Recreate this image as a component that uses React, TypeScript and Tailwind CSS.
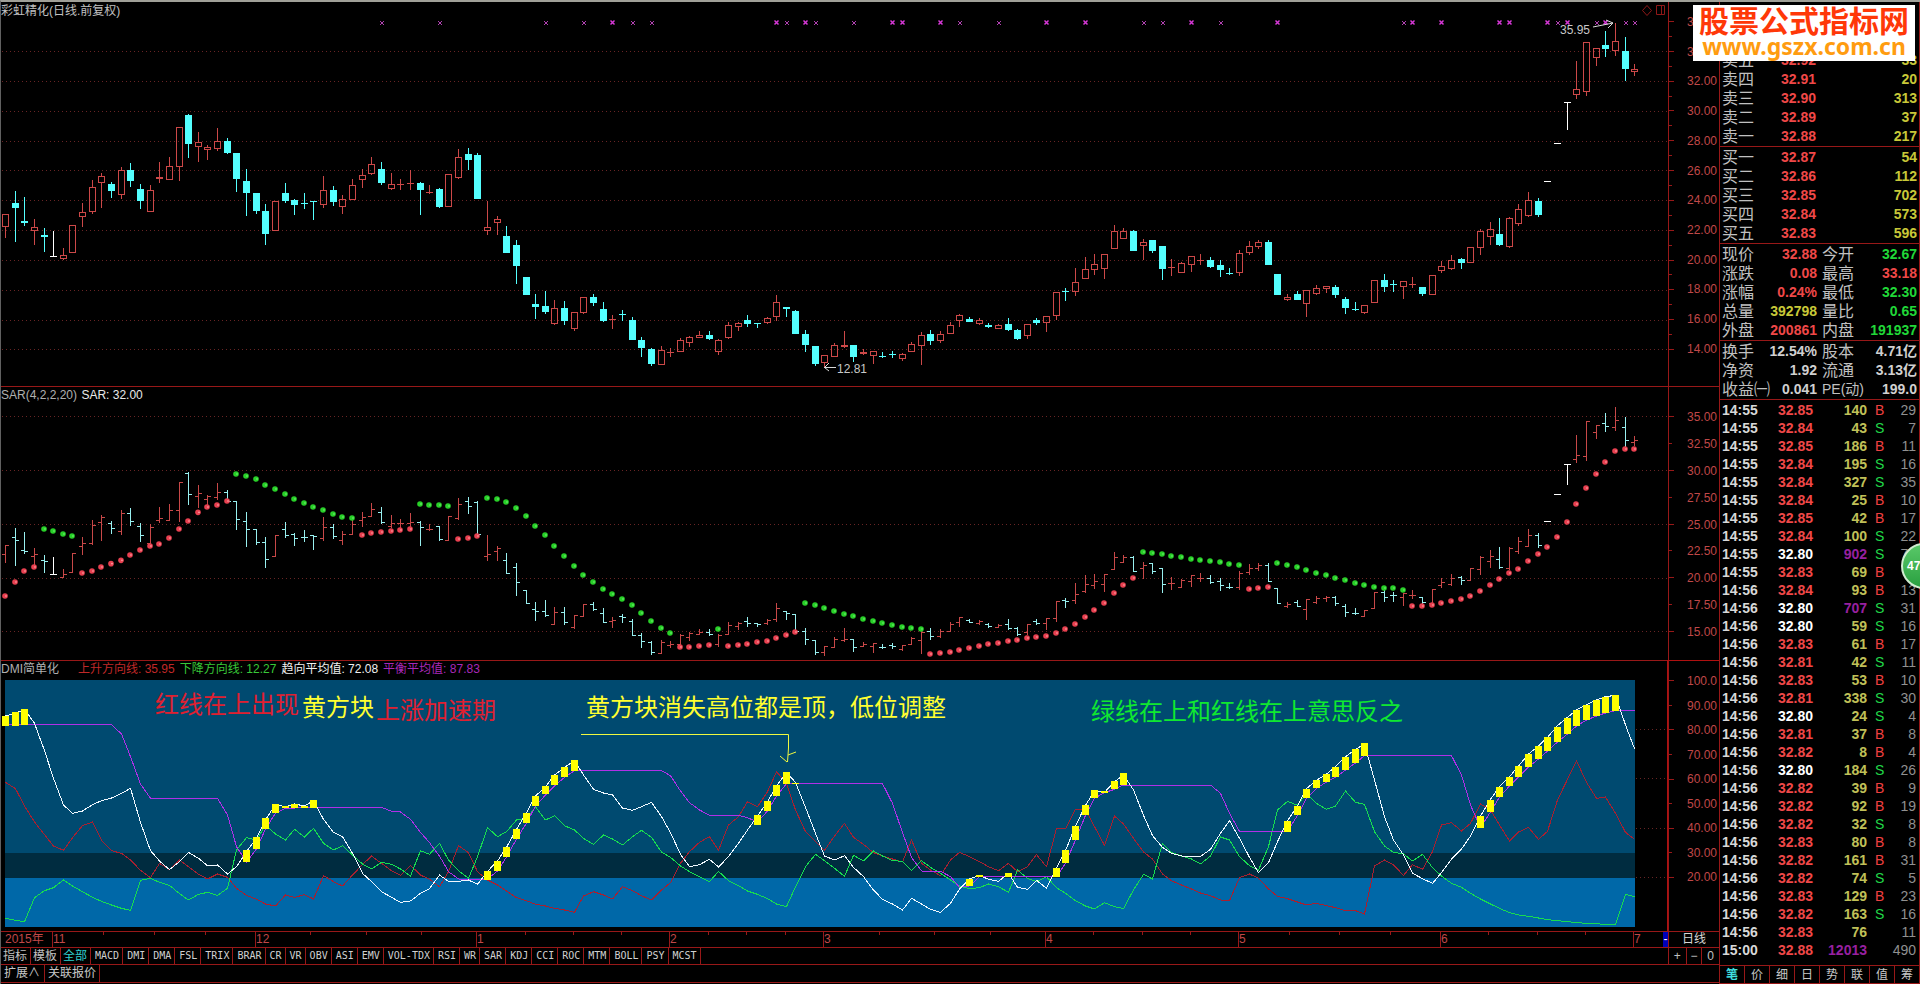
import clsx from 'clsx';

type Kind = 'u' | 'd' | 'w';
type Candle = [Kind, number, number, number, number];

// kind, high, body top, body bottom, low (three units per pixel)
const CANDLES: Candle[] = [
    ['u', 643, 643, 681, 714], ['d', 573, 609, 624, 726], ['d', 590, 664, 668, 678], ['u', 657, 681, 692, 735],
    ['d', 684, 706, 710, 756], ['w', 694, 767, 767, 767], ['u', 744, 766, 776, 779], ['u', 676, 676, 758, 758],
    ['u', 610, 637, 650, 681], ['u', 541, 562, 635, 641], ['u', 519, 529, 548, 624], ['d', 546, 552, 573, 594],
    ['u', 500, 511, 584, 597], ['d', 489, 510, 543, 560], ['d', 552, 567, 603, 627], ['u', 556, 571, 635, 637],
    ['u', 486, 532, 538, 549], ['u', 472, 499, 539, 539], ['u', 382, 382, 500, 543], ['d', 342, 345, 432, 474],
    ['u', 396, 427, 440, 486], ['u', 435, 442, 451, 480], ['u', 384, 423, 446, 452], ['d', 414, 423, 459, 461],
    ['d', 459, 459, 537, 576], ['d', 507, 543, 579, 648], ['d', 579, 579, 633, 641], ['d', 612, 633, 702, 735],
    ['u', 604, 604, 692, 692], ['d', 549, 579, 603, 609], ['d', 596, 599, 615, 644], ['d', 580, 609, 612, 627],
    ['d', 603, 603, 605, 660], ['u', 528, 571, 616, 623], ['d', 558, 570, 606, 617], ['u', 586, 598, 622, 641],
    ['u', 538, 556, 599, 600], ['u', 508, 526, 539, 564], ['u', 471, 493, 523, 524], ['d', 487, 507, 549, 554],
    ['u', 519, 553, 566, 571], ['u', 537, 552, 554, 570], ['u', 510, 550, 553, 569], ['d', 545, 549, 570, 644],
    ['u', 556, 576, 578, 582], ['d', 564, 567, 621, 624], ['u', 523, 523, 622, 622], ['u', 448, 472, 533, 537],
    ['d', 444, 462, 480, 510], ['d', 459, 465, 597, 597], ['u', 604, 682, 692, 705], ['u', 648, 658, 670, 705],
    ['d', 678, 708, 759, 759], ['d', 720, 735, 798, 852], ['d', 831, 831, 885, 885], ['d', 882, 912, 920, 957],
    ['d', 873, 918, 936, 941], ['u', 901, 925, 973, 975], ['d', 903, 924, 963, 975], ['u', 937, 937, 986, 992],
    ['u', 892, 892, 938, 941], ['d', 883, 891, 909, 917], ['d', 906, 927, 963, 965], ['u', 945, 956, 959, 987],
    ['d', 931, 942, 944, 963], ['d', 951, 960, 1020, 1020], ['d', 1011, 1020, 1044, 1071], ['d', 1045, 1047, 1092, 1098],
    ['u', 1038, 1050, 1094, 1094], ['u', 1044, 1056, 1060, 1071], ['u', 1014, 1021, 1055, 1055], ['u', 1008, 1012, 1028, 1040],
    ['u', 994, 1006, 1013, 1014], ['d', 993, 1005, 1017, 1020], ['u', 1017, 1021, 1055, 1064], ['u', 967, 976, 1013, 1017],
    ['u', 965, 969, 980, 993], ['d', 945, 961, 971, 980], ['d', 970, 970, 972, 983], ['u', 951, 955, 968, 972],
    ['u', 885, 907, 952, 962], ['d', 921, 921, 927, 951], ['d', 930, 933, 1002, 1002], ['d', 990, 1002, 1035, 1056],
    ['d', 1038, 1038, 1092, 1098], ['u', 1066, 1066, 1088, 1101], ['u', 1029, 1036, 1070, 1071], ['u', 992, 1036, 1041, 1045],
    ['d', 1035, 1035, 1071, 1086], ['u', 1047, 1056, 1063, 1064], ['u', 1052, 1054, 1067, 1091], ['d', 1056, 1068, 1070, 1075],
    ['d', 1053, 1062, 1064, 1075], ['u', 1059, 1062, 1076, 1083], ['u', 1026, 1033, 1055, 1055], ['u', 997, 1006, 1039, 1096],
    ['d', 991, 1002, 1023, 1035], ['u', 994, 1003, 1022, 1028], ['u', 966, 975, 1003, 1003], ['u', 943, 946, 964, 980],
    ['d', 951, 957, 965, 967], ['u', 955, 960, 971, 974], ['d', 969, 975, 980, 984], ['u', 972, 976, 986, 987],
    ['d', 953, 972, 990, 993], ['d', 987, 990, 1017, 1020], ['u', 973, 973, 1007, 1016], ['d', 953, 960, 968, 975],
    ['u', 949, 949, 970, 996], ['u', 877, 877, 947, 961], ['d', 864, 873, 876, 903], ['u', 804, 847, 875, 887],
    ['u', 771, 808, 836, 838], ['u', 763, 793, 809, 824], ['u', 763, 763, 806, 837], ['u', 675, 694, 746, 746],
    ['u', 684, 694, 716, 717], ['d', 690, 693, 753, 753], ['u', 716, 727, 738, 780], ['d', 720, 720, 752, 759],
    ['d', 738, 738, 807, 840], ['u', 777, 801, 804, 828], ['u', 786, 790, 818, 819], ['u', 768, 769, 794, 815],
    ['u', 761, 780, 782, 795], ['d', 770, 780, 800, 804], ['d', 780, 795, 810, 831], ['d', 803, 819, 821, 824],
    ['u', 751, 760, 818, 828], ['u', 724, 739, 758, 765], ['u', 720, 727, 740, 748], ['d', 720, 726, 795, 795],
    ['d', 822, 822, 885, 885], ['u', 882, 892, 899, 904], ['d', 872, 882, 900, 900], ['u', 871, 871, 911, 951],
    ['u', 856, 865, 881, 885], ['u', 858, 859, 866, 878], ['d', 855, 861, 885, 893], ['d', 891, 897, 924, 942],
    ['d', 906, 927, 929, 933], ['u', 915, 916, 938, 942], ['u', 841, 841, 908, 908], ['d', 822, 840, 860, 876],
    ['d', 840, 852, 854, 877], ['u', 843, 844, 860, 896], ['u', 831, 851, 854, 864], ['d', 861, 861, 881, 888],
    ['u', 826, 826, 884, 884], ['u', 783, 799, 812, 819], ['u', 765, 781, 806, 809], ['d', 774, 777, 788, 807],
    ['u', 742, 742, 788, 788], ['u', 688, 694, 743, 765], ['u', 666, 688, 710, 735], ['d', 654, 702, 735, 738],
    ['u', 651, 655, 740, 743], ['u', 612, 628, 671, 678], ['u', 576, 601, 647, 650], ['d', 594, 603, 645, 651],
    ['w', 544, 544, 544, 544], ['w', 430, 430, 430, 430], ['w', 307, 307, 307, 390], ['u', 184, 268, 284, 297],
    ['u', 127, 127, 275, 288], ['u', 145, 145, 173, 198], ['d', 93, 135, 147, 171], ['u', 70, 124, 154, 167],
    ['d', 110, 153, 207, 243], ['u', 192, 206, 215, 228],
];

// first bar, trend, dot heights
const SAR: [number, 'up' | 'down', number[]][] = [
    [0, 'up', [648, 606, 573, 561]],
    [4, 'down', [447, 453, 462, 468]],
    [8, 'up', [579, 573, 561, 551, 541, 525, 510, 498, 492, 474, 447, 423, 397, 381, 375, 363]],
    [24, 'down', [282, 288, 297, 315, 327, 342, 357, 369, 381, 390, 402, 411, 414]],
    [37, 'up', [465, 459, 456, 453, 450, 447]],
    [43, 'down', [372, 375, 375, 378]],
    [47, 'up', [477, 474, 468]],
    [50, 'down', [354, 357, 366, 384, 408, 438, 465, 498, 528, 558, 585, 606, 627, 642, 657, 675, 699, 723, 744, 759]],
    [70, 'up', [801, 801, 798, 795]],
    [74, 'down', [747]],
    [75, 'up', [798, 795, 792, 786, 783, 774, 765, 756]],
    [83, 'down', [669, 675, 684, 693, 702, 708, 717, 723, 729, 735, 741, 744, 747]],
    [96, 'up', [822, 819, 816, 810, 804, 798, 792, 789, 783, 780, 774, 771, 768, 759, 747, 732, 711, 690, 669, 639, 615, 594]],
    [118, 'down', [516, 519, 522, 528, 531, 537, 540, 543, 546, 552, 555]],
    [129, 'up', [627, 624, 621]],
    [132, 'down', [549, 555, 561, 570, 579, 585, 594, 600, 609, 615, 621, 624, 624, 630]],
    [146, 'up', [678, 678, 675, 669, 663, 657, 648, 633, 615, 597, 579, 567, 543, 522, 501, 471, 426, 372, 324, 282, 246, 213, 207, 207]],
];

const ADX = [
    168, 160, 148, 190, 272, 355, 435, 460, 453, 434, 422, 414, 400, 385, 487, 572, 603, 629, 605, 577,
    595, 617, 615, 642, 620, 575, 535, 480, 433, 441, 432, 438, 422, 478, 517, 530, 580, 640, 665, 695,
    712, 727, 723, 700, 686, 645, 664, 664, 660, 673, 634, 603, 562, 508, 458, 408, 380, 345, 322, 302,
    345, 388, 399, 405, 444, 451, 440, 427, 470, 518, 583, 620, 614, 598, 621, 590, 550, 510, 468, 425,
    378, 338, 367, 442, 520, 588, 600, 587, 622, 650, 690, 718, 732, 750, 715, 732, 748, 757, 730, 687,
    657, 646, 658, 664, 640, 682, 688, 661, 685, 624, 572, 498, 436, 393, 397, 365, 345, 390, 466, 527,
    562, 580, 588, 589, 589, 568, 520, 482, 535, 592, 638, 608, 545, 482, 437, 386, 361, 342, 320, 290,
    268, 252, 360, 470, 540, 585, 640, 656, 670, 638, 597, 567, 528, 468, 418, 380, 350, 318, 282, 258,
    232, 197, 172, 150, 134, 120, 110, 106, 195, 266,
];

const PLUS_DI = [
    367, 386, 438, 486, 524, 558, 571, 533, 497, 486, 541, 572, 580, 600, 631, 653, 610, 629, 600, 620,
    643, 657, 642, 652, 685, 706, 718, 732, 738, 705, 712, 704, 717, 647, 665, 678, 645, 614, 588, 610,
    632, 646, 616, 645, 658, 680, 635, 557, 578, 635, 660, 675, 693, 713, 722, 733, 738, 745, 750, 757,
    708, 695, 705, 717, 680, 692, 707, 720, 690, 668, 610, 575, 547, 530, 571, 495, 470, 425, 440, 395,
    335, 370, 450, 515, 545, 571, 528, 490, 532, 553, 578, 588, 597, 606, 540, 610, 630, 647, 600, 577,
    590, 605, 620, 632, 610, 635, 620, 584, 620, 505, 507, 448, 448, 500, 556, 468, 492, 535, 576, 597,
    642, 662, 675, 687, 699, 707, 720, 722, 653, 642, 655, 687, 709, 716, 726, 735, 730, 737, 743, 752,
    752, 762, 618, 600, 615, 646, 614, 628, 575, 495, 488, 513, 490, 432, 450, 495, 543, 516, 502, 538,
    514, 420, 358, 302, 367, 415, 411, 460, 517, 538,
];

const MINUS_DI = [
    775, 781, 785, 713, 692, 683, 660, 678, 695, 712, 724, 735, 745, 751, 661, 655, 667, 676, 701, 720,
    703, 697, 706, 685, 570, 533, 540, 495, 522, 540, 508, 531, 505, 550, 570, 557, 585, 612, 627, 607,
    613, 627, 648, 572, 583, 550, 600, 632, 655, 590, 503, 530, 515, 480, 478, 440, 480, 467, 497, 510,
    535, 553, 525, 537, 555, 530, 511, 532, 576, 592, 618, 635, 650, 665, 634, 662, 677, 693, 703, 716,
    732, 740, 680, 620, 583, 602, 625, 649, 586, 603, 573, 588, 602, 604, 632, 602, 622, 640, 660, 678,
    686, 683, 672, 680, 697, 630, 655, 665, 650, 683, 700, 722, 738, 747, 728, 740, 746, 690, 643, 657,
    550, 577, 588, 597, 612, 588, 531, 540, 590, 617, 630, 560, 450, 424, 436, 400, 430, 448, 438, 393,
    427, 433, 515, 558, 577, 582, 603, 583, 623, 648, 670, 682, 700, 717, 732, 745, 758, 765, 769, 774,
    779, 782, 785, 788, 790, 791, 794, 794, 703, 710,
];

// bar index, height; flat stretches are left out
const ADXR: [number, number][] = [
    [0, 194], [11, 194], [12, 222], [13, 290], [14, 372], [15, 415], [22, 415], [23, 465], [24, 560], [25, 606],
    [26, 567], [27, 507], [28, 459], [29, 445], [32, 442], [39, 442], [40, 454], [41, 456], [42, 478], [43, 517],
    [44, 548], [45, 588], [46, 635], [47, 657], [50, 657], [51, 633], [52, 591], [53, 537], [54, 489], [55, 438],
    [56, 405], [57, 378], [58, 352], [59, 332], [68, 332], [69, 347], [70, 393], [71, 428], [72, 450], [73, 466],
    [76, 466], [77, 473], [78, 486], [79, 453], [80, 408], [81, 371], [91, 371], [92, 430], [93, 518], [94, 592],
    [95, 633], [97, 634], [98, 650], [99, 682], [100, 678], [101, 650], [109, 650], [110, 610], [111, 540],
    [112, 466], [113, 415], [114, 398], [115, 388], [116, 375], [125, 375], [126, 400], [127, 460], [128, 514],
    [133, 514], [134, 466], [135, 415], [136, 385], [137, 366], [138, 352], [139, 330], [140, 309], [141, 287],
    [150, 287], [151, 345], [152, 435], [153, 503], [154, 456], [155, 411], [156, 378], [157, 351], [158, 321],
    [159, 297], [160, 273], [161, 246], [162, 222], [163, 198], [164, 180], [165, 168], [166, 159], [167, 152], [169, 152],
];

// bar index, top, bottom
const BLOCKS: [number, number, number][] = [
    [0, 168, 198], [1, 157, 198], [2, 148, 194], [25, 570, 606], [26, 531, 567], [27, 474, 507], [28, 432, 459],
    [29, 439, 445], [30, 432, 444], [31, 437, 443], [32, 420, 444], [50, 633, 660], [51, 603, 633], [52, 561, 591],
    [53, 507, 537], [54, 459, 489], [55, 408, 438], [56, 378, 402], [57, 345, 375], [58, 321, 351], [59, 300, 333],
    [78, 465, 495], [79, 423, 453], [80, 375, 408], [81, 336, 372], [82, 369, 372], [100, 657, 678], [101, 645, 650],
    [104, 639, 650], [109, 624, 651], [110, 570, 609], [111, 498, 540], [112, 435, 465], [113, 390, 414],
    [114, 393, 398], [115, 363, 387], [116, 339, 375], [133, 483, 516], [134, 438, 465], [135, 387, 414],
    [136, 360, 384], [137, 342, 366], [138, 321, 351], [139, 291, 330], [140, 267, 309], [141, 249, 288],
    [153, 468, 504], [154, 420, 456], [155, 381, 411], [156, 351, 378], [157, 318, 351], [158, 282, 321],
    [159, 258, 297], [160, 231, 273], [161, 200, 246], [162, 174, 222], [163, 150, 198], [164, 135, 180],
    [165, 120, 168], [166, 111, 159], [167, 105, 153],
];

const MARKS = [39, 45, 56, 60, 65, 67, 81, 84, 88, 99, 103, 118, 120, 126, 145, 161, 165, 168, 169];
const BOLD_MARKS = [63, 80, 83, 92, 93, 97, 108, 112, 123, 132, 146, 149, 155, 156, 160, 162, 166];

const PRICE_LABELS = ['36.00', '34.00', '32.00', '30.00', '28.00', '26.00', '24.00', '22.00', '20.00', '18.00', '16.00', '14.00'];
const SAR_LABELS = ['35.00', '32.50', '30.00', '27.50', '25.00', '22.50', '20.00', '17.50', '15.00'];
const DMI_LABELS = ['100.0', '90.00', '80.00', '70.00', '60.00', '50.00', '40.00', '30.00', '20.00'];

const MONTHS = ['11', '12', '1', '2', '3', '4', '5', '6', '7'];
const WEEK_TICKS = [103, 154, 205, 310, 366, 421, 525, 573, 621, 708, 746, 785, 879, 934, 990, 1093, 1142, 1190, 1289, 1339, 1390, 1488, 1537, 1585];

const INDICATORS = [
    'MACD', 'DMI', 'DMA', 'FSL', 'TRIX', 'BRAR', 'CR', 'VR', 'OBV', 'ASI', 'EMV', 'VOL-TDX', 'RSI', 'WR', 'SAR',
    'KDJ', 'CCI', 'ROC', 'MTM', 'BOLL', 'PSY', 'MCST',
];

const ASKS = [['卖五', '32.92', '33'], ['卖四', '32.91', '20'], ['卖三', '32.90', '313'], ['卖二', '32.89', '37'], ['卖一', '32.88', '217']];
const BIDS = [['买一', '32.87', '54'], ['买二', '32.86', '112'], ['买三', '32.85', '702'], ['买四', '32.84', '573'], ['买五', '32.83', '596']];

const RED = 'text-[#f04848]';
const GREEN = 'text-[#20d838]';
const YELLOW = 'text-[#c8c838]';
const WHITE = 'text-[#d0d0d0]';

const QUOTE = [
    ['现价', '32.88', RED, '今开', '32.67', GREEN],
    ['涨跌', '0.08', RED, '最高', '33.18', RED],
    ['涨幅', '0.24%', RED, '最低', '32.30', GREEN],
    ['总量', '392798', YELLOW, '量比', '0.65', GREEN],
    ['外盘', '200861', RED, '内盘', '191937', GREEN],
];

const FUNDAMENTALS = [
    ['换手', '12.54%', WHITE, '股本', '4.71亿', WHITE],
    ['净资', '1.92', WHITE, '流通', '3.13亿', WHITE],
    ['收益㈠', '0.041', WHITE, 'PE(动)', '199.0', WHITE],
];

const TRADES = [
    ['14:55', '32.85', '140', 'B', '29'], ['14:55', '32.84', '43', 'S', '7'], ['14:55', '32.85', '186', 'B', '11'],
    ['14:55', '32.84', '195', 'S', '16'], ['14:55', '32.84', '327', 'S', '35'], ['14:55', '32.84', '25', 'B', '10'],
    ['14:55', '32.85', '42', 'B', '17'], ['14:55', '32.84', '100', 'S', '22'], ['14:55', '32.80', '902', 'S', '72'],
    ['14:55', '32.83', '69', 'B', '9'], ['14:56', '32.84', '93', 'B', '13'], ['14:56', '32.80', '707', 'S', '31'],
    ['14:56', '32.80', '59', 'S', '16'], ['14:56', '32.83', '61', 'B', '17'], ['14:56', '32.81', '42', 'S', '11'],
    ['14:56', '32.83', '53', 'B', '10'], ['14:56', '32.81', '338', 'S', '30'], ['14:56', '32.80', '24', 'S', '4'],
    ['14:56', '32.81', '37', 'B', '8'], ['14:56', '32.82', '8', 'B', '4'], ['14:56', '32.80', '184', 'S', '26'],
    ['14:56', '32.82', '39', 'B', '9'], ['14:56', '32.82', '92', 'B', '19'], ['14:56', '32.82', '32', 'S', '8'],
    ['14:56', '32.83', '80', 'B', '8'], ['14:56', '32.82', '161', 'B', '31'], ['14:56', '32.82', '74', 'S', '5'],
    ['14:56', '32.83', '129', 'B', '23'], ['14:56', '32.82', '163', 'S', '16'], ['14:56', '32.83', '76', '', '11'],
    ['15:00', '32.88', '12013', '', '490'],
];

const barX = (i: number) => Math.floor(5.5 + 9.64 * i);
const px = (v: number) => Math.round(v / 3);
const dmiLine = (values: number[]) => values.map((v, i) => `${barX(i) + 0.5},${660 + v / 3}`).join(' ');

// price pane height -> SAR pane height
const sarY = (v: number) => Math.round(470.3 + (v / 3 - 111) * 0.72);

const CANDLE_COLORS = { u: '#cc4848', d: '#54ffff', w: '#ffffff' };
const BAR_COLORS = { u: '#c84848', d: '#98f0f0', w: '#ffffff' };

const GridLines = ({ ys, from = 2, to = 1668 }: { ys: number[]; from?: number; to?: number }) => (
    <g stroke="#682424" strokeDasharray="1 3">
        {ys.map((y) => (
            <line key={y} x1={from} x2={to} y1={y + 0.5} y2={y + 0.5} />
        ))}
    </g>
);

const PriceChart = () => (
    <svg viewBox="1 18 1667 368" className="block h-auto w-full" shapeRendering="crispEdges">
        <GridLines ys={[51, 81, 111, 141, 170, 200, 230, 260, 290, 320, 349]} />
        {MARKS.map((i) => (
            <path key={i} d={`M${barX(i) - 1} 21l4 4m0 -4l-4 4`} stroke="#b040b0" shapeRendering="auto" />
        ))}
        {BOLD_MARKS.map((i) => (
            <path key={i} d={`M${barX(i) - 1.5} 20.5l4 4m0 -4l-4 4`} stroke="#d838d8" strokeWidth="1.5" shapeRendering="auto" />
        ))}
        {CANDLES.map(([kind, high, top, bottom, low], i) => {
            const x = barX(i);
            const color = CANDLE_COLORS[kind];
            const height = Math.max(1, px(bottom) - px(top));
            const hollow = kind === 'u' && height > 2;
            return (
                <g key={i} fill={color}>
                    <rect x={x} y={px(high)} width="1" height={Math.max(0, px(top) - px(high))} />
                    <rect x={x} y={px(bottom)} width="1" height={Math.max(0, px(low) - px(bottom))} />
                    {hollow ? (
                        <rect x={x - 2.5} y={px(top) + 0.5} width="6" height={height - 1} fill="none" stroke={color} />
                    ) : (
                        <rect x={x - 3} y={px(top)} width="7" height={height} />
                    )}
                </g>
            );
        })}
        <g fontSize="12" fill="#c8c8c8">
            <text x="1560" y="34">35.95</text>
            <text x="837" y="373">12.81</text>
        </g>
        <g stroke="#d8d8d8" fill="none" shapeRendering="auto">
            <path d="M1593 27L1613 23M1606 20L1613 23L1608 28" />
            <path d="M836 367.500H824M829 363L824.500 367.500L829 371" />
        </g>
    </svg>
);

const SarChart = () => (
    <svg viewBox="1 405 1667 255" className="block h-auto w-full" shapeRendering="crispEdges">
        <GridLines ys={[416, 470, 524, 578, 631]} />
        {CANDLES.map(([kind, high, top, bottom, low], i) => {
            const x = barX(i);
            const open = sarY(kind === 'u' ? bottom : top);
            const close = sarY(kind === 'u' ? top : bottom);
            return (
                <g key={i} fill={BAR_COLORS[kind]}>
                    <rect x={x} y={sarY(high)} width="1" height={sarY(low) - sarY(high) + 1} />
                    <rect x={x - 3} y={open} width="3" height="1" />
                    <rect x={x + 1} y={close} width="3" height="1" />
                </g>
            );
        })}
        <g shapeRendering="auto">
            {SAR.flatMap(([start, trend, values]) =>
                values.map((v, k) => (
                    <g key={start + k}>
                        <circle cx={barX(start + k)} cy={380 + v / 3} r="2.8" fill={trend === 'up' ? '#e84050' : '#28d028'} />
                        <circle cx={barX(start + k) + 1} cy={380 + v / 3} r="0.8" fill={trend === 'up' ? '#ffb0b0' : '#80f080'} />
                    </g>
                ))
            )}
        </g>
    </svg>
);

const DmiChart = () => (
    <svg viewBox="1 679 1667 252" className="block h-auto w-full">
        <g shapeRendering="crispEdges">
            <GridLines ys={[729, 778, 828, 877]} from={1636} />
            <rect x="5" y="680" width="1630" height="173" fill="#004a70" />
            <rect x="5" y="853" width="1630" height="25" fill="#002c40" />
            <rect x="5" y="878" width="1630" height="49" fill="#0068a8" />
        </g>
        <g fill="none" strokeLinejoin="round" shapeRendering="crispEdges">
            <polyline points={dmiLine(PLUS_DI)} stroke="#a82030" />
            <polyline points={dmiLine(MINUS_DI)} stroke="#18dc50" />
            <polyline points={ADXR.map(([i, v]) => `${barX(i) + 0.5},${660 + v / 3}`).join(' ')} stroke="#b030e8" />
            <polyline points={dmiLine(ADX)} stroke="#f0f8ff" />
        </g>
        <g fill="#ffff00" shapeRendering="crispEdges">
            {BLOCKS.map(([i, top, bottom]) => (
                <rect key={i} x={barX(i) - 3} y={660 + px(top)} width="7" height={Math.max(1, px(bottom) - px(top))} />
            ))}
        </g>
        <path d="M581 734.500H788.500V748L787.500 762M780 756L787 762M788 755L796 752" fill="none" stroke="#f0f840" />
        <g fontSize="24">
            <text x="155" y="713" fill="#e02030">红线在上出现</text>
            <text x="302" y="716" fill="#ffff30">黄方块</text>
            <text x="376" y="719" fill="#e02030">上涨加速期</text>
            <text x="586" y="716" fill="#ffff30">黄方块消失高位都是顶，低位调整</text>
            <text x="1091" y="720" fill="#10e830">绿线在上和红线在上意思反之</text>
        </g>
    </svg>
);

type AxisProps = { labels: string[]; className: string; ticks: number; from: number; to: number; height: number };

const Axis = ({ labels, className, ticks, from, to, height }: AxisProps) => (
    <div className="flex w-[51px] shrink-0 border-l border-[#981818]">
        <svg viewBox={`0 0 6 ${height}`} className="w-1.5 shrink-0" preserveAspectRatio="none" shapeRendering="crispEdges">
            {Array.from({ length: ticks }, (_, i) => (
                <rect key={i} y={Math.round(from + ((to - from) * i) / (ticks - 1))} width={i % 2 ? 3 : 5} height="1" fill="#981818" />
            ))}
        </svg>
        <div className={clsx('flex flex-1 flex-col justify-between pr-0.5 text-right text-xs leading-4 text-[#c04848]', className)}>
            {labels.map((label) => (
                <span key={label}>{label}</span>
            ))}
        </div>
    </div>
);

const DepthTable = ({ rows }: { rows: string[][] }) => (
    <table className="w-full table-fixed border-b border-[#981818]">
        <tbody>
            {rows.map(([label, price, volume]) => (
                <tr key={label} className="h-[19px] text-sm leading-[19px] font-bold">
                    <th scope="row" className="w-[50px] pl-0.5 text-left text-base leading-[19px] font-normal text-[#c0c0c0]">{label}</th>
                    <td className={clsx('w-[46px] text-right', RED)}>{price}</td>
                    <td className={clsx('pr-0.5 text-right', YELLOW)}>{volume}</td>
                </tr>
            ))}
        </tbody>
    </table>
);

const QuoteTable = ({ rows }: { rows: string[][] }) => (
    <table className="w-full table-fixed border-b border-[#981818]">
        <tbody>
            {rows.map(([label, value, color, label2, value2, color2]) => (
                <tr key={label} className="h-[19px] text-sm leading-[19px] font-bold whitespace-nowrap">
                    <th scope="row" className="w-[48px] pl-0.5 text-left text-base leading-[19px] font-normal text-[#c0c0c0]">{label}</th>
                    <td className={clsx('w-[49px] text-right', color)}>{value}</td>
                    <th scope="row" className={clsx('w-[46px] pl-[5px] text-left font-normal text-[#c0c0c0]', label2.startsWith('PE') ? 'text-sm leading-[19px]' : 'text-base leading-[19px]')}>{label2}</th>
                    <td className={clsx('pr-0.5 text-right', color2)}>{value2}</td>
                </tr>
            ))}
        </tbody>
    </table>
);

const TradeTable = () => (
    <table className="w-full table-fixed">
        <tbody>
            {TRADES.map(([time, price, volume, side, count], i) => (
                <tr key={i} className="h-[18px] text-sm leading-[18px] font-bold">
                    <td className="w-[50px] pl-0.5 text-[#d8d8d8]">{time}</td>
                    <td className={clsx('w-[43px] text-right', price === '32.80' ? 'text-white' : RED)}>{price}</td>
                    <td className={clsx('w-[54px] text-right', Number(volume) > 500 ? 'text-[#9820a0]' : 'text-[#c0c058]')}>{volume}</td>
                    <td className={clsx('w-[24px] pl-2 font-normal', side === 'B' ? 'text-[#f04040]' : 'text-[#20d848]')}>{side}</td>
                    <td className="pr-[3px] text-right font-normal text-[#909090]">{count}</td>
                </tr>
            ))}
        </tbody>
    </table>
);

const SidePanel = () => (
    <aside className="flex w-[201px] shrink-0 flex-col border-x border-[#981818] pt-[49px]">
        <div className="pb-px">
            <DepthTable rows={ASKS} />
        </div>
        <div className="pb-px">
            <DepthTable rows={BIDS} />
        </div>
        <div className="pb-px">
            <QuoteTable rows={QUOTE} />
        </div>
        <div className="pb-px">
            <QuoteTable rows={FUNDAMENTALS} />
        </div>
        <TradeTable />
        <nav className="mt-auto flex h-[19px] border-y border-[#981818] text-xs text-[#c8c8c8]">
            {['笔', '价', '细', '日', '势', '联', '值', '筹'].map((tab, i) => (
                <button key={tab} className={clsx('flex-1 border-r border-[#981818] last:border-r-0', i === 0 && 'font-bold text-[#40e0e0]')}>{tab}</button>
            ))}
        </nav>
    </aside>
);

const TimeAxis = () => (
    <div className="flex h-[17px] border-y border-[#981818] text-xs leading-[15px] text-[#c04848]">
        <div className="relative grid flex-1 grid-cols-[51fr_203fr_221fr_193fr_154fr_222fr_193fr_202fr_193fr_30fr_5fr]">
            <svg viewBox="1 0 1667 3" className="absolute inset-x-0 top-0 h-[3px]" preserveAspectRatio="none">
                {WEEK_TICKS.map((x) => (
                    <rect key={x} x={x} width="1" height="3" fill="#981818" />
                ))}
            </svg>
            <span className="min-w-0 pl-1 whitespace-nowrap">2015年</span>
            {MONTHS.map((month) => (
                <span key={month} className="min-w-0 border-l border-[#981818]">{month}</span>
            ))}
            <span className="min-w-0 bg-[#0000b8] text-center text-white">-</span>
        </div>
        <button className="w-[51px] shrink-0 border-l border-[#981818] text-[#d8d8d8]">日线</button>
    </div>
);

const Toolbar = () => (
    <div className="flex h-[17px] border-b border-[#981818] text-xs leading-4 text-[#c0c0c0]">
        <nav className="flex flex-1">
            {['指标', '模板', '全部'].map((name) => (
                <button key={name} className={clsx('border-r border-[#981818] pr-[3px] pl-0.5', name === '全部' && 'text-[#30d0d0]')}>{name}</button>
            ))}
            {INDICATORS.map((name) => (
                <button key={name} className="border-r border-[#981818] pr-[3px] pl-1 font-['DejaVu_Sans_Mono',monospace] text-[10px] text-[#d0d0d0]">{name}</button>
            ))}
        </nav>
        <div className="grid w-[51px] shrink-0 grid-cols-3 border-l border-[#981818]">
            <button>+</button>
            <button className="border-x border-[#981818]">−</button>
            <button>0</button>
        </div>
    </div>
);

const Brand = () => (
    <a href="#" className="absolute top-[3px] right-[5px] flex h-14 w-[222px] flex-col items-center bg-white font-bold">
        <span className="text-[30px] leading-[34px] whitespace-nowrap text-[#ff3808]">股票公式指标网</span>
        <span className="font-['Noto_Sans',sans-serif] text-[23px] leading-[14px] text-[#ff9c10]">www.gszx.com.cn</span>
    </a>
);

export default function App() {
    return (
        <div className="relative flex min-h-screen overflow-hidden border-t-2 border-l border-t-[#a0a098] border-l-[#606060] bg-black font-['Liberation_Sans','Noto_Sans_CJK_SC',sans-serif]">
            <main className="flex min-w-0 flex-1 flex-col">
                <section className="flex border-b border-[#981818]">
                    <div className="min-w-0 flex-1">
                        <div className="flex h-4 justify-between pr-0.5 text-xs leading-[18px] text-[#c0c0c0]">
                            <h1>彩虹精化(日线.前复权)</h1>
                            <svg viewBox="0 0 24 16" className="h-4 w-6" fill="none" stroke="#901818">
                                <path d="M5 3.500L9.500 8.500L5 13.500L0.500 8.500Z" />
                                <path d="M14.500 3.500H22.500V12.500H14.500ZM19.500 3.500V12.500" />
                            </svg>
                        </div>
                        <PriceChart />
                    </div>
                    <Axis labels={PRICE_LABELS} className="pt-3 pb-[29px]" ticks={23} from={19} to={347} height={384} />
                </section>
                <section className="flex border-b border-[#981818]">
                    <div className="min-w-0 flex-1">
                        <h2 className="h-[18px] text-xs leading-4 text-[#b0b0b0]">
                            SAR(4,2,2,20) <span className="pl-px text-[#e8e8e8]">SAR: 32.00</span>
                        </h2>
                        <SarChart />
                    </div>
                    <Axis labels={SAR_LABELS} className="pt-[22px] pb-[20px]" ticks={9} from={29} to={244} height={273} />
                </section>
                <section className="flex">
                    <div className="min-w-0 flex-1">
                        <h2 className="flex h-[18px] gap-[5px] text-xs leading-4 whitespace-nowrap text-[#b0b0b0]">
                            <span className="pr-3.5">DMI简单化</span>
                            <span className="text-[#c02828]">上升方向线: 35.95</span>
                            <span className="text-[#38c838]">下降方向线: 12.27</span>
                            <span className="text-[#f0f0f0]">趋向平均值: 72.08</span>
                            <span className="text-[#a828b8]">平衡平均值: 87.83</span>
                        </h2>
                        <DmiChart />
                    </div>
                    <div className="flex shrink-0 outline-1 outline-[#b01010]">
                        <Axis labels={DMI_LABELS} className="pt-3 pb-[46px]" ticks={9} from={19} to={216} height={270} />
                    </div>
                </section>
                <TimeAxis />
                <Toolbar />
                <nav className="flex h-[18px] border-b border-[#981818] text-xs leading-[17px] text-[#c8c8c8]">
                    <button className="border-r border-[#981818] pr-1 pl-[3px]">扩展∧</button>
                    <button className="border-r border-[#981818] px-[3px]">关联报价</button>
                </nav>
            </main>
            <SidePanel />
            <Brand />
            <button className="absolute top-[541px] -right-[27px] size-[46px] rounded-full border-2 border-[#d0ecd0] bg-linear-to-b from-[#58c868] to-[#28a040] pl-1 text-left text-xs font-bold text-white">
                47
            </button>
        </div>
    );
}
